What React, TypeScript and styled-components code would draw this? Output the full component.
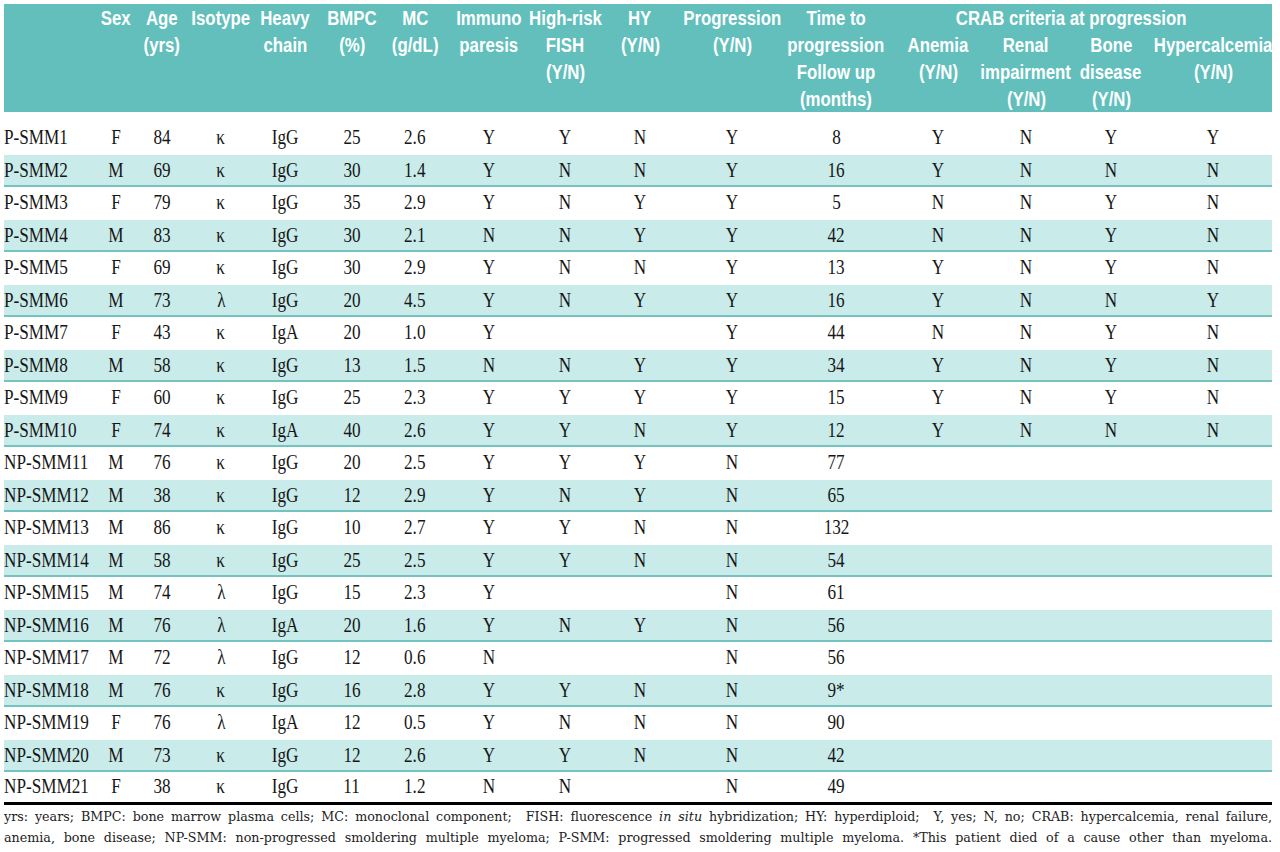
import styled, { createGlobalStyle } from 'styled-components';

const GlobalStyle = createGlobalStyle`
  html, body {
    margin: 0;
    padding: 0;
    background: #ffffff;
  }
`;

// column widths: label, sex, age, isotype, heavy chain, bmpc, mc, immuno, fish, hy,
// progression, time, anemia, renal, bone, hypercalcemia
const COLS = '94px 36px 56px 62px 66px 68px 58px 90px 62px 88px 96px 112px 92px 84px 86px 118px';

type Row = [string, string, string, string, string, string, string, string, string, string, string, string, string?, string?, string?, string?];

const rows: Row[] = [
  ['P-SMM1', 'F', '84', 'κ', 'IgG', '25', '2.6', 'Y', 'Y', 'N', 'Y', '8', 'Y', 'N', 'Y', 'Y'],
  ['P-SMM2', 'M', '69', 'κ', 'IgG', '30', '1.4', 'Y', 'N', 'N', 'Y', '16', 'Y', 'N', 'N', 'N'],
  ['P-SMM3', 'F', '79', 'κ', 'IgG', '35', '2.9', 'Y', 'N', 'Y', 'Y', '5', 'N', 'N', 'Y', 'N'],
  ['P-SMM4', 'M', '83', 'κ', 'IgG', '30', '2.1', 'N', 'N', 'Y', 'Y', '42', 'N', 'N', 'Y', 'N'],
  ['P-SMM5', 'F', '69', 'κ', 'IgG', '30', '2.9', 'Y', 'N', 'N', 'Y', '13', 'Y', 'N', 'Y', 'N'],
  ['P-SMM6', 'M', '73', 'λ', 'IgG', '20', '4.5', 'Y', 'N', 'Y', 'Y', '16', 'Y', 'N', 'N', 'Y'],
  ['P-SMM7', 'F', '43', 'κ', 'IgA', '20', '1.0', 'Y', '', '', 'Y', '44', 'N', 'N', 'Y', 'N'],
  ['P-SMM8', 'M', '58', 'κ', 'IgG', '13', '1.5', 'N', 'N', 'Y', 'Y', '34', 'Y', 'N', 'Y', 'N'],
  ['P-SMM9', 'F', '60', 'κ', 'IgG', '25', '2.3', 'Y', 'Y', 'Y', 'Y', '15', 'Y', 'N', 'Y', 'N'],
  ['P-SMM10', 'F', '74', 'κ', 'IgA', '40', '2.6', 'Y', 'Y', 'N', 'Y', '12', 'Y', 'N', 'N', 'N'],
  ['NP-SMM11', 'M', '76', 'κ', 'IgG', '20', '2.5', 'Y', 'Y', 'Y', 'N', '77'],
  ['NP-SMM12', 'M', '38', 'κ', 'IgG', '12', '2.9', 'Y', 'N', 'Y', 'N', '65'],
  ['NP-SMM13', 'M', '86', 'κ', 'IgG', '10', '2.7', 'Y', 'Y', 'N', 'N', '132'],
  ['NP-SMM14', 'M', '58', 'κ', 'IgG', '25', '2.5', 'Y', 'Y', 'N', 'N', '54'],
  ['NP-SMM15', 'M', '74', 'λ', 'IgG', '15', '2.3', 'Y', '', '', 'N', '61'],
  ['NP-SMM16', 'M', '76', 'λ', 'IgA', '20', '1.6', 'Y', 'N', 'Y', 'N', '56'],
  ['NP-SMM17', 'M', '72', 'λ', 'IgG', '12', '0.6', 'N', '', '', 'N', '56'],
  ['NP-SMM18', 'M', '76', 'κ', 'IgG', '16', '2.8', 'Y', 'Y', 'N', 'N', '9*'],
  ['NP-SMM19', 'F', '76', 'λ', 'IgA', '12', '0.5', 'Y', 'N', 'N', 'N', '90'],
  ['NP-SMM20', 'M', '73', 'κ', 'IgG', '12', '2.6', 'Y', 'Y', 'N', 'N', '42'],
  ['NP-SMM21', 'F', '38', 'κ', 'IgG', '11', '1.2', 'N', 'N', '', 'N', '49'],
];

const mainHeads: string[][] = [
  [],
  ['Sex'],
  ['Age', '(yrs)'],
  ['Isotype'],
  ['Heavy', 'chain'],
  ['BMPC', '(%)'],
  ['MC', '(g/dL)'],
  ['Immuno', 'paresis'],
  ['High-risk', 'FISH', '(Y/N)'],
  ['HY', '(Y/N)'],
  ['Progression', '(Y/N)'],
  ['Time to', 'progression', 'Follow up', '(months)'],
];

const crabHeads: string[][] = [
  ['Anemia', '(Y/N)'],
  ['Renal', 'impairment', '(Y/N)'],
  ['Bone', 'disease', '(Y/N)'],
  ['Hypercalcemia', '(Y/N)'],
];

const App = () => {
  return (
    <Page>
      <GlobalStyle />
      <Table>
        <Header>
          {mainHeads.map((lines, i) => (
            <HeadCell key={i}>
              {lines.map(l => <HeadLine key={l}>{l}</HeadLine>)}
            </HeadCell>
          ))}
          <CrabTitle><HeadLine>CRAB criteria at progression</HeadLine></CrabTitle>
          {crabHeads.map((lines, i) => (
            <HeadCell key={'c' + i} $sub>
              {lines.map(l => <HeadLine key={l}>{l}</HeadLine>)}
            </HeadCell>
          ))}
        </Header>

        <Body>
          {rows.map((r, i) => (
            <DataRow key={r[0]} $shade={i % 2 === 1}>
              {Array.from({ length: 16 }).map((_, c) => (
                <Cell key={c} $left={c === 0}>
                  <CellText $left={c === 0}>{r[c] ?? ''}</CellText>
                </Cell>
              ))}
            </DataRow>
          ))}
        </Body>

        <Note>
          <NoteLine>
            yrs: years; BMPC: bone marrow plasma cells; MC: monoclonal component;&nbsp; FISH: fluorescence <i>in situ</i> hybridization; HY: hyperdiploid;&nbsp; Y, yes; N, no; CRAB: hypercalcemia, renal failure,
          </NoteLine>
          <NoteLine>
            anemia, bone disease; NP-SMM: non-progressed smoldering multiple myeloma; P-SMM: progressed smoldering multiple myeloma. *This patient died of a cause other than myeloma.
          </NoteLine>
        </Note>
      </Table>
    </Page>
  );
};

const Page = styled.div`
  padding: 4px 0 0 4px;
`;

const Table = styled.div`
  width: 1268px;
`;

const Header = styled.div`
  display: grid;
  grid-template-columns: ${COLS};
  grid-template-rows: 27px 81px;
  height: 108px;
  background: #62bfbc;
  color: #ffffff;
  font-family: "Liberation Sans", Arial, sans-serif;
  font-weight: 700;
  font-size: 21px;
  line-height: 27px;
`;

const HeadCell = styled.div<{ $sub?: boolean }>`
  grid-row: ${p => (p.$sub ? '2' : '1 / span 2')};
  display: flex;
  flex-direction: column;
  align-items: center;
  white-space: nowrap;
`;

const CrabTitle = styled.div`
  grid-column: 13 / span 4;
  grid-row: 1;
  display: flex;
  justify-content: center;
  padding-right: 22px;
  white-space: nowrap;
`;

const HeadLine = styled.span`
  display: block;
  transform: scaleX(0.8);
`;

const Body = styled.div`
  margin-top: 10px;
  border-bottom: 3px solid #000000;
  font-family: "Liberation Serif", "Times New Roman", serif;
  font-size: 22px;
  color: #161616;
`;

const DataRow = styled.div<{ $shade: boolean }>`
  display: grid;
  grid-template-columns: ${COLS};
  align-items: center;
  box-sizing: border-box;
  height: 32.5px;
  background: ${p => (p.$shade ? '#c9ebea' : 'transparent')};
  border-bottom: 2px solid ${p => (p.$shade ? '#74c3c0' : 'transparent')};

  &:last-child {
    height: 30px;
  }
`;

const Cell = styled.div<{ $left?: boolean }>`
  display: flex;
  justify-content: ${p => (p.$left ? 'flex-start' : 'center')};
  white-space: nowrap;
`;

const CellText = styled.span<{ $left?: boolean }>`
  display: inline-block;
  transform: scaleX(0.78);
  transform-origin: ${p => (p.$left ? 'left' : 'center')} center;
`;

const Note = styled.div`
  font-family: "DejaVu Serif", "Liberation Serif", serif;
  font-size: 12.7px;
  line-height: 21px;
  padding-top: 1px;
  color: #222222;
`;

const NoteLine = styled.div`
  text-align: justify;
  text-align-last: justify;
`;

export default App;
